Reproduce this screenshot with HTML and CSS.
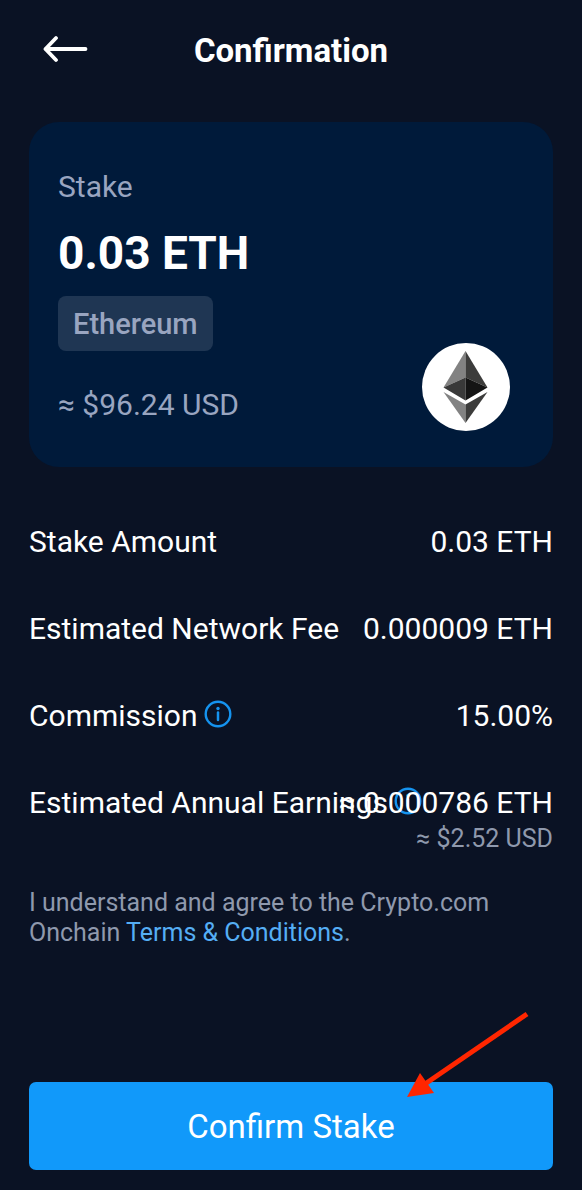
FILE: index.html
```html
<!DOCTYPE html>
<html lang="en">
<head>
<meta charset="utf-8">
<meta name="viewport" content="width=device-width, initial-scale=1">
<title>Confirmation</title>
<link rel="stylesheet" href="styles.css">
</head>
<body>
<div class="screen">
  <header class="topbar">
    <button class="back" type="button" aria-label="Back">
      <svg width="48" height="32" viewBox="0 0 48 32" fill="none" stroke="#fff" stroke-width="3.800" stroke-linecap="round" stroke-linejoin="round"><path d="M13 5 L2.500 16 L13 27 M2.500 16 H42.500"/></svg>
    </button>
    <h1 class="title">Confirmation</h1>
  </header>

  <main class="content">
    <section class="card">
      <div class="card-info">
        <p class="card-text">Stake</p>
        <p class="amount">0.03 ETH</p>
        <span class="chip">Ethereum</span>
        <p class="card-text fiat">≈ $96.24 USD</p>
      </div>
      <svg class="coin" width="88" height="88" viewBox="0 0 88 88" aria-hidden="true">
        <circle cx="44" cy="44" r="44" fill="#fff"/>
        <path d="M43.500 8 L21.500 44.500 L43.500 34.500Z" fill="#828282"/>
        <path d="M43.500 8 L65.500 44.500 L43.500 34.500Z" fill="#3c3c3b"/>
        <path d="M43.500 34.500 L21.500 44.500 L43.500 57.500Z" fill="#393939"/>
        <path d="M43.500 34.500 L65.500 44.500 L43.500 57.500Z" fill="#141414"/>
        <path d="M21.500 49 L43.500 61.500 V80Z" fill="#828282"/>
        <path d="M65.500 49 L43.500 61.500 V80Z" fill="#3c3c3b"/>
      </svg>
    </section>

    <dl class="details">
      <div class="row">
        <dt class="label">Stake Amount</dt>
        <dd class="value">0.03 ETH</dd>
      </div>
      <div class="row">
        <dt class="label">Estimated Network Fee</dt>
        <dd class="value">0.000009 ETH</dd>
      </div>
      <div class="row">
        <dt class="label">Commission
          <button class="info" type="button" aria-label="About commission">
            <svg width="28" height="28" viewBox="0 0 28 28"><circle cx="14" cy="14" r="12.300" fill="none" stroke="#1593ef" stroke-width="2.400"/><circle cx="14" cy="8.500" r="1.700" fill="#1593ef"/><path d="M14 12.500V20" stroke="#1593ef" stroke-width="2.500" stroke-linecap="round"/></svg>
          </button>
        </dt>
        <dd class="value">15.00%</dd>
      </div>
      <div class="row">
        <dt class="label">Estimated Annual Earnings
          <button class="info" type="button" aria-label="About estimated annual earnings">
            <svg width="28" height="28" viewBox="0 0 28 28"><circle cx="14" cy="14" r="12.300" fill="none" stroke="#1593ef" stroke-width="2.400"/><circle cx="14" cy="8.500" r="1.700" fill="#1593ef"/><path d="M14 12.500V20" stroke="#1593ef" stroke-width="2.500" stroke-linecap="round"/></svg>
          </button>
        </dt>
        <dd class="value">≈ 0.000786 ETH<span class="subvalue">≈ $2.52 USD</span></dd>
      </div>
    </dl>

    <p class="terms">I understand and agree to the Crypto.com Onchain <a class="link" href="#terms">Terms &amp; Conditions</a>.</p>
  </main>

  <footer class="actions">
    <button class="confirm" type="button">Confirm Stake</button>
    <svg class="pointer" width="124" height="88" viewBox="0 0 124 88" aria-hidden="true">
      <path d="M120 3 L18 73" stroke="#ff2600" stroke-width="5"/>
      <path d="M0 86 L13 62 L27 82Z" fill="#ff2600"/>
    </svg>
  </footer>
</div>
</body>
</html>
```
FILE: styles.css
```css
* {
  box-sizing: border-box;
}

body {
  margin: 0;
  background: #0a1224;
  color: #fff;
  font-family: Roboto, "Liberation Sans", sans-serif;
  font-size: 30px;
  line-height: 36px;
}

h1, p, dl, dd {
  margin: 0;
}

button {
  border: 0;
  padding: 0;
  background: none;
  color: inherit;
  font: inherit;
  cursor: pointer;
}

svg {
  display: block;
}

.screen {
  display: flex;
  flex-direction: column;
  min-height: 100vh;
  padding: 0 29px 20px;
}

.topbar {
  display: grid;
  grid-template-columns: 1fr auto 1fr;
  align-items: center;
  height: 102px;
  padding: 0 14px;
}

.back {
  justify-self: start;
  padding-bottom: 4px;
}

.title {
  font-size: 33px;
  font-weight: 700;
}

.content {
  flex: 1;
  padding-top: 20px;
}

.card {
  display: flex;
  justify-content: space-between;
  align-items: flex-end;
  padding: 47px 43px 36px 29px;
  border-radius: 30px;
  background: #001a3a;
}

.card-info {
  padding-bottom: 8px;
}

.card-text {
  color: #99a5c0;
}

.amount {
  margin: 20px 0 15px;
  font-size: 46px;
  font-weight: 700;
  line-height: 56px;
}

.chip {
  display: inline-block;
  padding: 10px 15px 9px;
  border-radius: 8px;
  background: #1f3653;
  color: #99a5c0;
  font-size: 29px;
  font-weight: 500;
}

.fiat {
  margin-top: 36px;
}

.details {
  display: flex;
  flex-direction: column;
  gap: 51px;
  padding-top: 57px;
}

.row {
  display: grid;
}

/* Label and value share one cell, each on its own side */
.label,
.value {
  grid-area: 1 / 1;
  white-space: nowrap;
}

.label {
  display: flex;
  align-items: flex-start;
  gap: 6px;
}

.value {
  justify-self: end;
  text-align: right;
  pointer-events: none;
}

.subvalue {
  display: block;
  color: #8f99ad;
  font-size: 25px;
}

.info {
  margin-top: 2px;
}

.terms {
  padding: 31px 40px 32px 0;
  color: #8f99ad;
  font-size: 25px;
  line-height: 30px;
}

.link {
  color: #55aef5;
  text-decoration: none;
}

.actions {
  position: relative;
}

.confirm {
  width: 100%;
  height: 88px;
  padding-top: 2px;
  border-radius: 7px;
  background: #1199fa;
  font-size: 33px;
}

.pointer {
  position: absolute;
  top: -71px;
  right: 22px;
  pointer-events: none;
}
```
